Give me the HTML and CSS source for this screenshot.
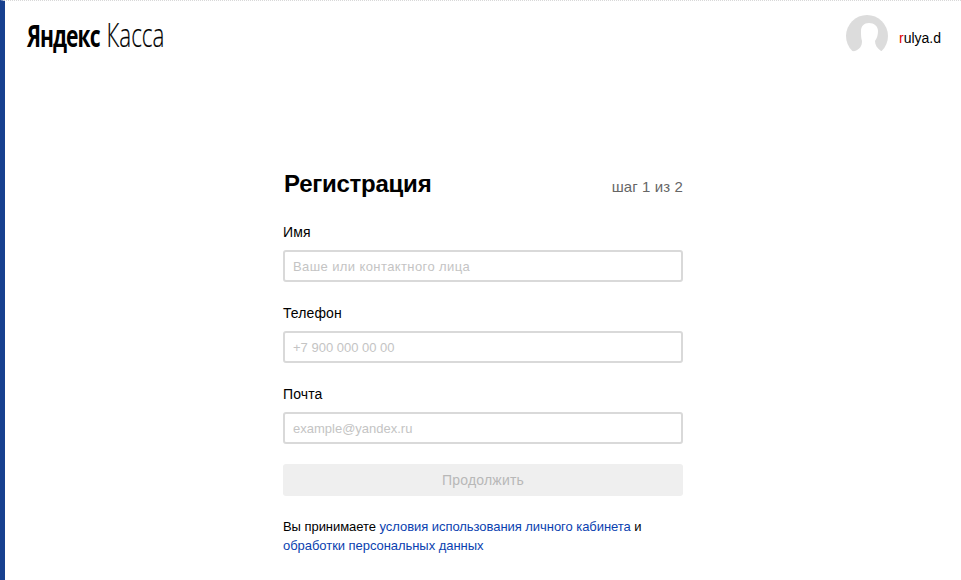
FILE: index.html
```html
<!DOCTYPE html>
<html lang="ru">
<head>
<meta charset="utf-8">
<title>Яндекс Касса</title>
<link rel="stylesheet" href="styles.css">
</head>
<body>
<div class="page">
  <header class="header">
    <div class="logo"><span class="logo-text"><b>Яндекс</b> <span class="logo-light">Касса</span></span></div>
    <div class="user">
      <svg class="avatar" width="44" height="44" viewBox="0 0 44 44" aria-hidden="true">
        <circle cx="21" cy="22" r="21" fill="#dcdcdc"/>
        <path fill="#fff" d="M23 9C28 9 32 12 32 17C32 21 31 24 29 27C29 31 31 34 35 37L40 38V44H0V38L9 37C14 35 16 32 16 27C15 24 15 21 15 17C15 12 18 9 23 9Z"/>
      </svg>
      <span class="user-name"><span class="user-first">r</span>ulya.d</span>
    </div>
  </header>
  <main class="main">
    <form class="form">
      <div class="form-head">
        <h1 class="title">Регистрация</h1>
        <span class="step">шаг 1 из 2</span>
      </div>
      <div class="fields">
        <label class="field">
          <span class="field-label">Имя</span>
          <input class="input input-wide" type="text" placeholder="Ваше или контактного лица">
        </label>
        <label class="field">
          <span class="field-label">Телефон</span>
          <input class="input" type="text" placeholder="+7 900 000 00 00">
        </label>
        <label class="field">
          <span class="field-label">Почта</span>
          <input class="input" type="text" placeholder="example@yandex.ru">
        </label>
      </div>
      <button class="submit" type="button" disabled>Продолжить</button>
      <p class="terms">Вы принимаете <a href="#">условия использования личного кабинета</a> и<br><a href="#">обработки персональных данных</a></p>
    </form>
  </main>
</div>
</body>
</html>
```
FILE: styles.css
```css
* { box-sizing: border-box; }
html, body { margin: 0; height: 100%; }
body {
  font-family: "Liberation Sans", Arial, sans-serif;
  color: #000;
  background: #fff;
  overflow: hidden;
}
.page {
  height: 580px;
  border-left: 5px solid #17408f;
  border-top: 1px dotted #d8d8d8;
  display: flex;
  flex-direction: column;
}
.header {
  display: flex;
  justify-content: space-between;
  align-items: flex-start;
  padding: 13px 20px 0 22px;
  height: 110px;
}
.logo { height: 44px; }
.logo-text {
  display: inline-block;
  font-family: "Open Sans", sans-serif;
  font-size: 31px;
  line-height: 42px;
  letter-spacing: -1px;
  transform: scaleX(0.68);
  transform-origin: left center;
  white-space: nowrap;
}
.logo-text b { font-weight: 700; letter-spacing: -1.4px; }
.logo-light { font-weight: 300; font-size: 33px; margin-left: 3px; letter-spacing: 0; -webkit-text-stroke: 0.2px #000; }
.user { display: flex; align-items: center; gap: 9px; }
.avatar { display: block; }
.user-name { font-size: 14px; margin-top: 3px; }
.user-first { color: #e00000; }
.main { display: flex; justify-content: center; }
.form { width: 400px; margin-top: 48px; }
.form-head {
  display: flex;
  justify-content: space-between;
  align-items: center;
  height: 50px;
  margin-bottom: 13px;
}
.title { margin: 0 0 0 1px; font-size: 24px; font-weight: 700; line-height: 50px; letter-spacing: -0.25px; }
.step { font-size: 15px; color: #666; letter-spacing: 0.1px; margin-top: 5px; }
.fields { display: flex; flex-direction: column; gap: 21px; margin-bottom: 20px; }
.field { display: block; }
.field-label { display: block; font-size: 14px; line-height: 20px; margin-bottom: 8px; letter-spacing: 0.1px; }
.input {
  display: block;
  width: 100%;
  height: 32px;
  padding: 0 8px;
  border: 2px solid #d9d9d9;
  border-radius: 3px;
  font: 13px "Liberation Sans", Arial, sans-serif;
  outline: none;
}
.input-wide { letter-spacing: 0.4px; }
.input::placeholder { color: #c4c4c4; opacity: 1; }
.submit {
  display: block;
  width: 100%;
  height: 32px;
  border: 0;
  border-radius: 3px;
  background: #efefef;
  color: #b8b8b8;
  font: 14px "Liberation Sans", Arial, sans-serif;
  letter-spacing: 0.2px;
}
.terms { margin: 21px 0 0; font-size: 13px; line-height: 19px; letter-spacing: -0.05px; }
.terms a { color: #0a3fb0; text-decoration: none; }
```
